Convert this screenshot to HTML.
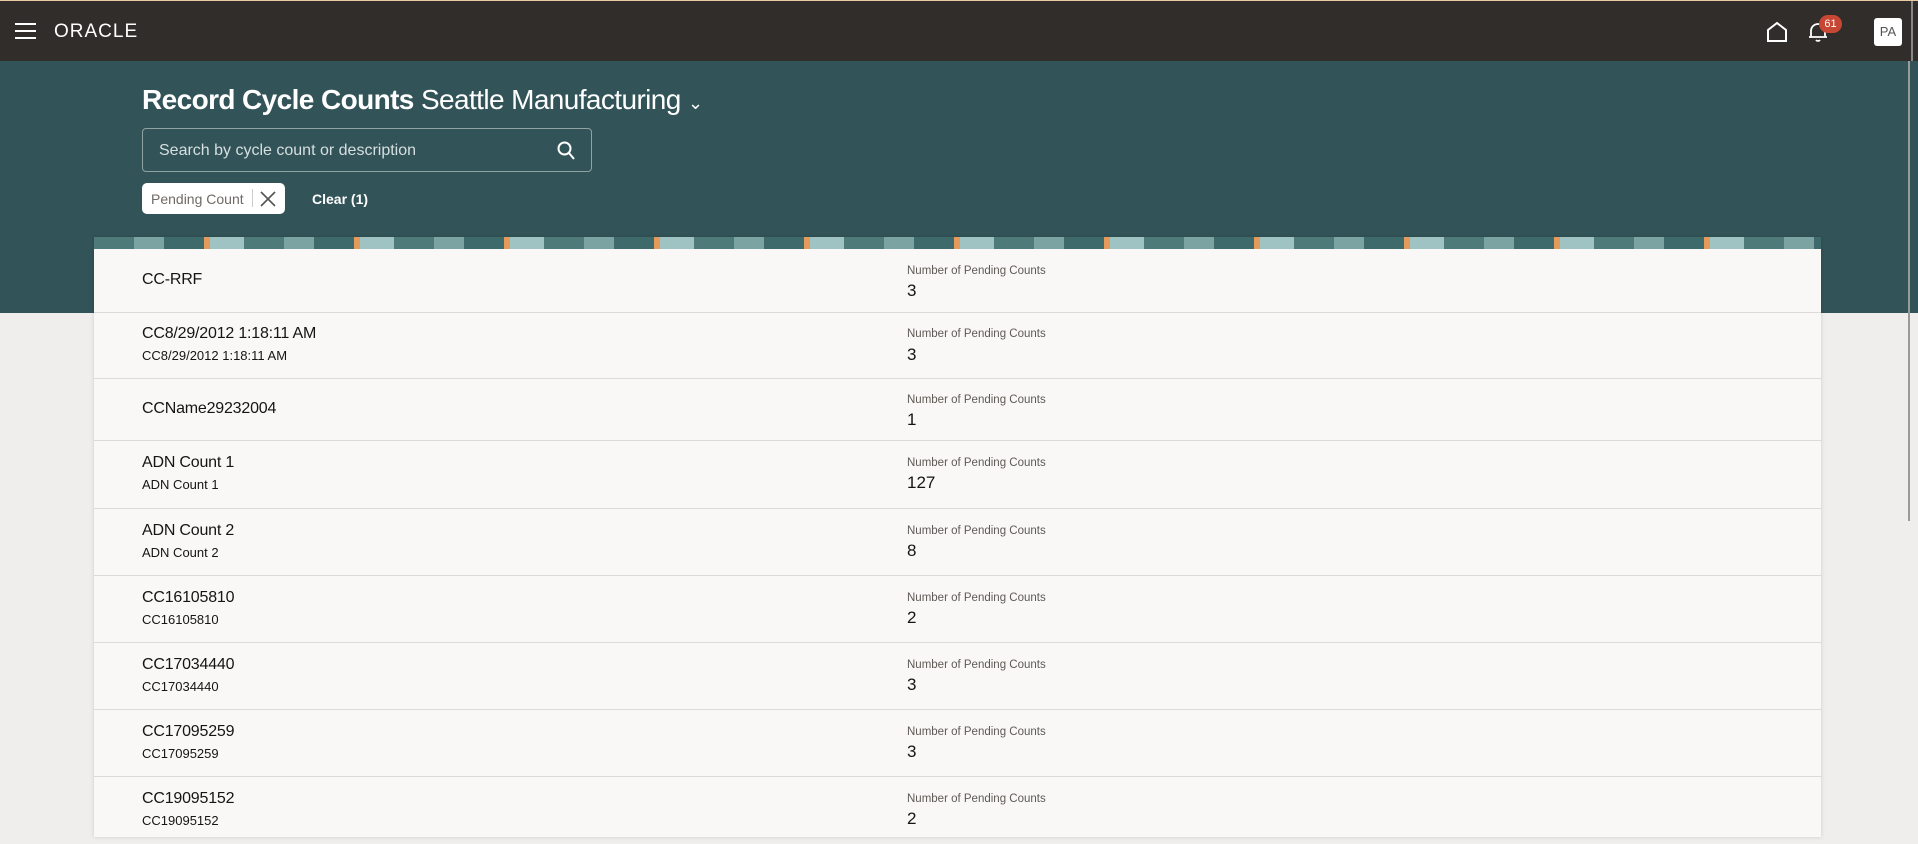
<!DOCTYPE html>
<html><head><meta charset="utf-8"><style>
*{box-sizing:border-box;margin:0;padding:0}
body{width:1918px;height:835px;overflow:hidden;background:#efeeec;font-family:"Liberation Sans",sans-serif;position:relative}
.top{position:absolute;left:0;top:0;width:1918px;height:61px;background:#312d2a;border-top:1px solid #e8c9a3}
.teal{position:absolute;left:0;top:61px;width:1918px;height:252px;background:#325358}
.title{position:absolute;left:142px;top:84px;color:#fff;font-size:28px;letter-spacing:-0.6px}
.title b{font-weight:bold}
.search{position:absolute;left:142px;top:128px;width:450px;height:44px;border:1px solid #8fa3a5;border-radius:4px;color:#d7dfe0;font-size:16px;padding:13px 16px}
.chip{position:absolute;left:142px;top:183px;width:143px;height:31px;background:#fff;border-radius:5px;font-size:14px;color:#6f6a66;padding:8px 9px}
.clear{position:absolute;left:312px;top:191px;color:#fff;font-weight:bold;font-size:14px}
.card{position:absolute;left:94px;top:237px;width:1727px;height:600px;background:#f9f8f6;box-shadow:0 0 4px rgba(0,0,0,.15)}
.pat{height:12px;background:repeating-linear-gradient(90deg,#4f7a7a 0 40px,#7aa3a2 40px 70px,#3e6a6b 70px 110px,#e39a5a 110px 116px,#9fc3c2 116px 150px)}
.row{position:absolute;left:0;width:1727px;border-bottom:1px solid #dcdad7}
.n{position:absolute;left:48px;font-size:16px;color:#161513;letter-spacing:-0.2px}
.s{position:absolute;left:48px;font-size:13px;color:#161513}
.l{position:absolute;left:813px;font-size:11.5px;color:#5e5a56}
.v{position:absolute;left:813px;font-size:17px;color:#161513}
.sb{position:absolute;right:8px;top:0;width:2px;height:460px;background:#9a9a9a}
</style></head><body>
<div class="top">
<svg style="position:absolute;left:15px;top:22px" width="22" height="16"><path d="M0 1h21M0 8h21M0 15h21" stroke="#fff" stroke-width="2"/></svg>
<div style="position:absolute;left:54px;top:20px;color:#fff;font-size:19px;letter-spacing:1px">ORACLE</div>
<svg style="position:absolute;left:1766px;top:20px" width="22" height="21"><path d="M2 20V9L11 2L20 9V20Z" fill="none" stroke="#fff" stroke-width="2"/></svg>
<svg style="position:absolute;left:1808px;top:20px" width="20" height="22"><path d="M3 16V10a7 7 0 0 1 14 0v6zM1 16h18M8 19a2.5 2.5 0 0 0 4 0" fill="none" stroke="#fff" stroke-width="1.8"/></svg>
<div style="position:absolute;left:1819px;top:14px;width:23px;height:18px;border-radius:9px;background:#c74634;color:#fff;font-size:11px;text-align:center;line-height:18px">61</div>
<div style="position:absolute;left:1874px;top:17px;width:28px;height:28px;border-radius:3px;background:#fff;color:#555;font-size:13px;text-align:center;line-height:28px">PA</div>
<div style="position:absolute;left:1911px;top:0;width:2px;height:61px;background:#888"></div>
</div>
<div class="teal"></div>
<div class="title"><b>Record Cycle Counts</b> Seattle Manufacturing <span style="font-size:18px">&#8964;</span></div>
<div class="search">Search by cycle count or description
<svg style="position:absolute;right:16px;top:12px" width="18" height="19"><circle cx="7.5" cy="7.5" r="6" fill="none" stroke="#fff" stroke-width="2"/><path d="M12 12l5 6" stroke="#fff" stroke-width="2"/></svg></div>
<div class="chip">Pending Count <span style="position:absolute;left:110px;top:6px;width:1px;height:18px;background:#ccc"></span>
<svg style="position:absolute;left:118px;top:8px" width="16" height="16"><path d="M1 1l14 14M15 1L1 15" stroke="#555" stroke-width="1.6"/></svg></div>
<div class="clear">Clear (1)</div>
<div class="card"><div class="pat"></div>
<div class="row" style="top:12px;height:64px"><div class="n" style="top:22px">CC-RRF</div><div class="l" style="top:16px">Number of Pending Counts</div><div class="v" style="top:32px">3</div></div>
<div class="row" style="top:76px;height:66px"><div class="n" style="top:12px">CC8/29/2012 1:18:11 AM</div><div class="s" style="top:35px">CC8/29/2012 1:18:11 AM</div><div class="l" style="top:15px">Number of Pending Counts</div><div class="v" style="top:32px">3</div></div>
<div class="row" style="top:142px;height:62px"><div class="n" style="top:21px">CCName29232004</div><div class="l" style="top:15px">Number of Pending Counts</div><div class="v" style="top:31px">1</div></div>
<div class="row" style="top:204px;height:68px"><div class="n" style="top:13px">ADN Count 1</div><div class="s" style="top:36px">ADN Count 1</div><div class="l" style="top:16px">Number of Pending Counts</div><div class="v" style="top:32px">127</div></div>
<div class="row" style="top:272px;height:67px"><div class="n" style="top:13px">ADN Count 2</div><div class="s" style="top:36px">ADN Count 2</div><div class="l" style="top:16px">Number of Pending Counts</div><div class="v" style="top:32px">8</div></div>
<div class="row" style="top:339px;height:67px"><div class="n" style="top:13px">CC16105810</div><div class="s" style="top:36px">CC16105810</div><div class="l" style="top:16px">Number of Pending Counts</div><div class="v" style="top:32px">2</div></div>
<div class="row" style="top:406px;height:67px"><div class="n" style="top:13px">CC17034440</div><div class="s" style="top:36px">CC17034440</div><div class="l" style="top:16px">Number of Pending Counts</div><div class="v" style="top:32px">3</div></div>
<div class="row" style="top:473px;height:67px"><div class="n" style="top:13px">CC17095259</div><div class="s" style="top:36px">CC17095259</div><div class="l" style="top:16px">Number of Pending Counts</div><div class="v" style="top:32px">3</div></div>
<div class="row" style="top:540px;height:67px;border:none"><div class="n" style="top:13px">CC19095152</div><div class="s" style="top:36px">CC19095152</div><div class="l" style="top:16px">Number of Pending Counts</div><div class="v" style="top:32px">2</div></div>
</div>
<div class="sb" style="top:61px"></div>
</body></html>
